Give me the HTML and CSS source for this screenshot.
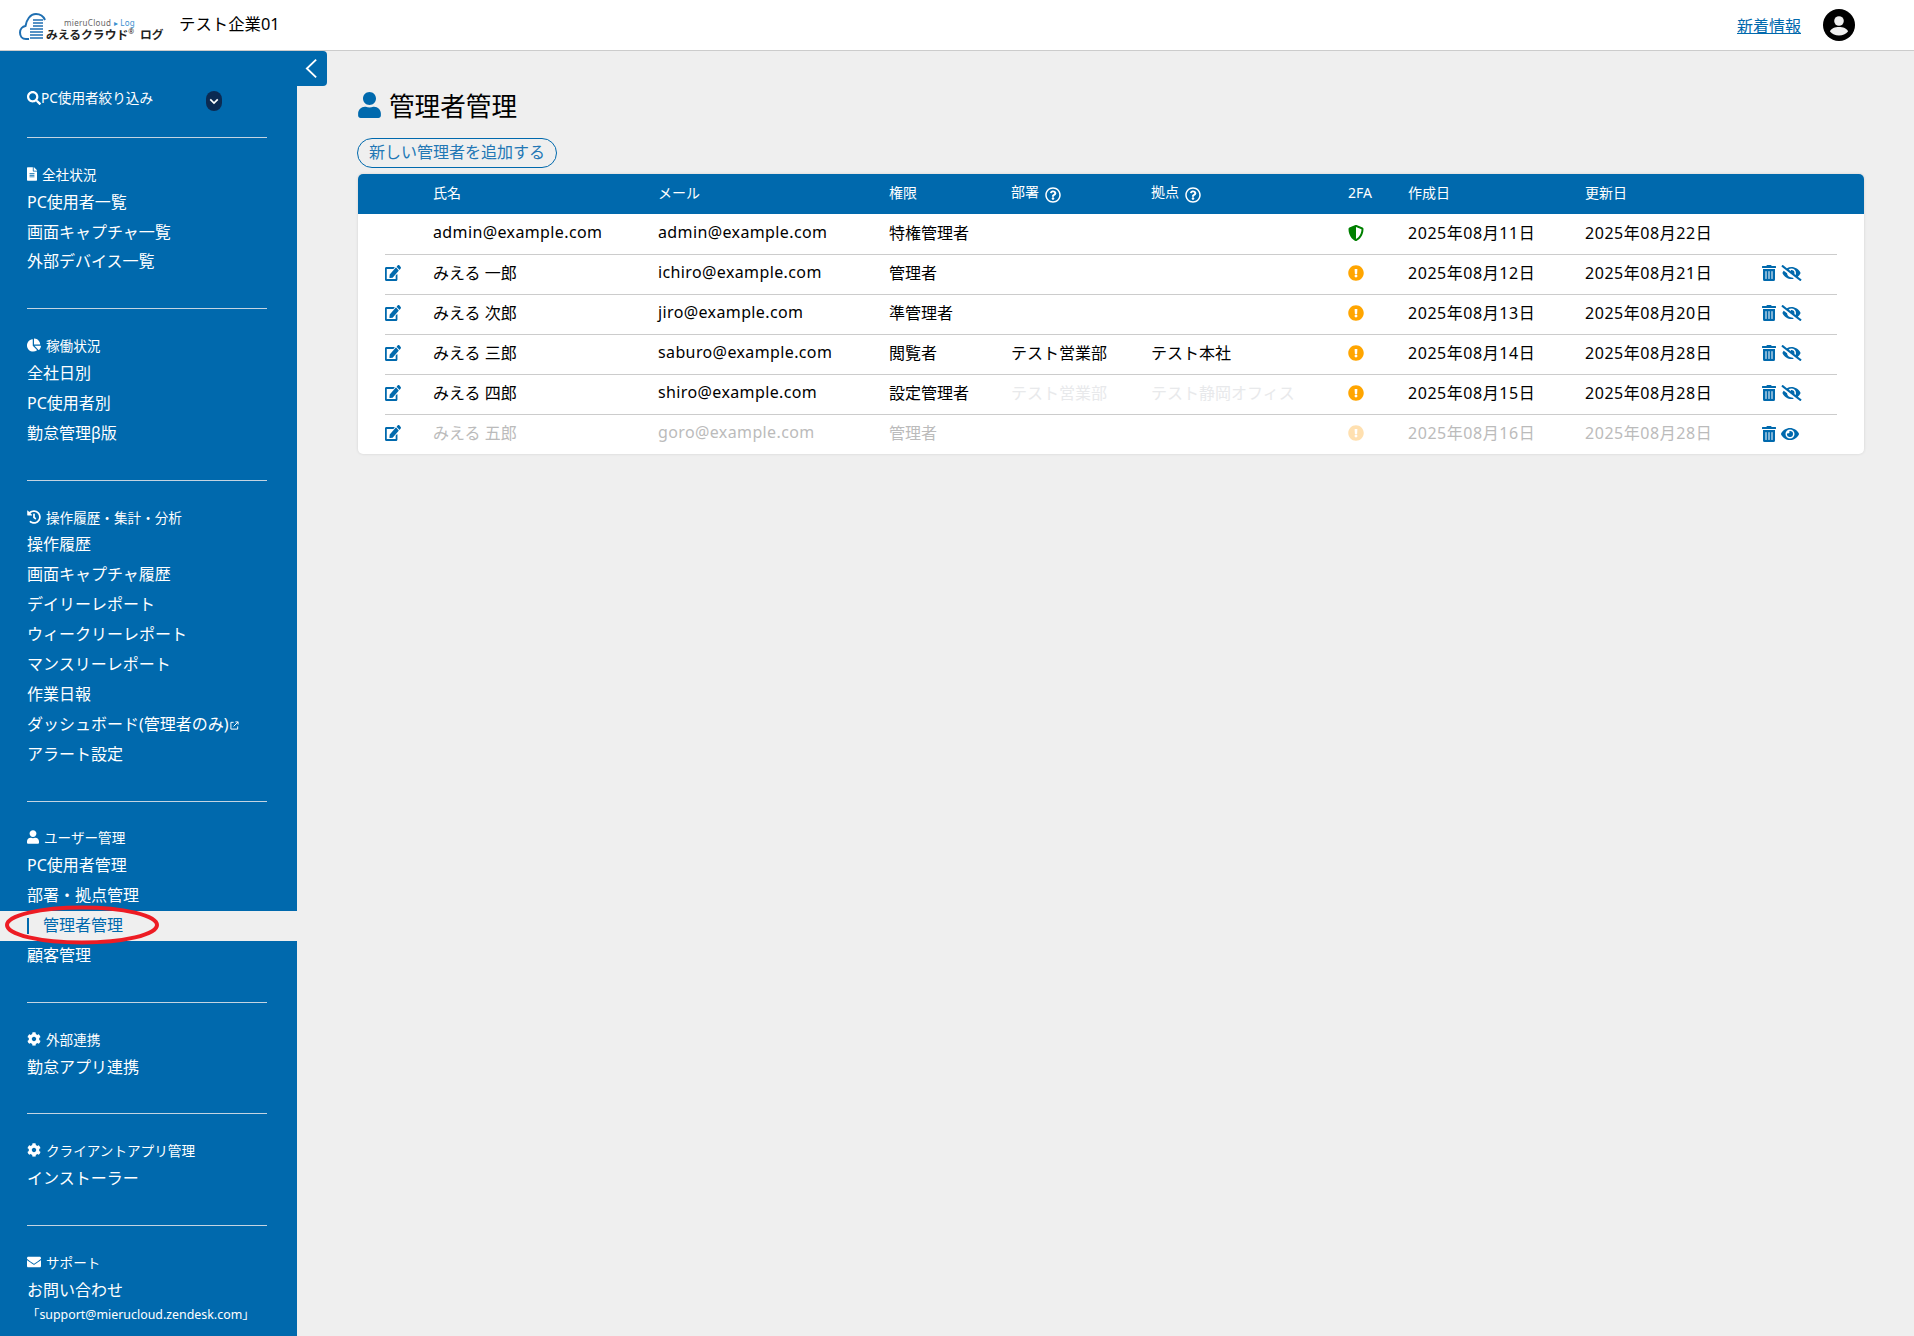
FILE: index.html
```html
<!DOCTYPE html>
<html lang="ja">
<head>
    <meta charset="utf-8">
    <meta name="viewport" content="width=device-width, initial-scale=1.0">
    <title>管理者管理</title>
    <link rel="stylesheet" href="styles.css">
</head>
<body>
    <!-- icon sprite -->
    <svg class="sprite" xmlns="http://www.w3.org/2000/svg">
        <symbol id="i-user" viewBox="0 0 448 512"><path d="M224 256c70.7 0 128-57.3 128-128S294.7 0 224 0 96 57.3 96 128s57.3 128 128 128zm89.6 32h-16.7c-22.2 10.2-46.9 16-72.9 16s-50.6-5.8-72.9-16h-16.7C60.2 288 0 348.2 0 422.4V464c0 26.5 21.5 48 48 48h352c26.5 0 48-21.5 48-48v-41.6c0-74.2-60.2-134.4-134.4-134.4z"/></symbol>
        <symbol id="i-edit" viewBox="0 0 576 512" preserveAspectRatio="none"><path d="M402.6 83.2l90.2 90.2c3.8 3.8 3.8 10 0 13.8L274.4 405.6l-92.8 10.3c-12.4 1.4-22.9-9.1-21.5-21.5l10.3-92.8L388.8 83.2c3.8-3.8 10-3.8 13.8 0zm162-22.9l-48.8-48.8c-15.2-15.2-39.9-15.2-55.2 0l-35.4 35.4c-3.8 3.8-3.8 10 0 13.8l90.2 90.2c3.8 3.8 10 3.8 13.8 0l35.4-35.4c15.2-15.3 15.2-40 0-55.2zM384 346.2V448H64V128h229.8c3.2 0 6.2-1.3 8.5-3.5l40-40c7.6-7.6 2.2-20.5-8.5-20.5H48C21.5 64 0 85.5 0 112v352c0 26.5 21.5 48 48 48h352c26.5 0 48-21.5 48-48V306.2c0-10.7-12.9-16-20.5-8.5l-40 40c-2.2 2.3-3.5 5.3-3.5 8.5z"/></symbol>
        <symbol id="i-trash" viewBox="0 0 448 512"><path d="M32 464a48 48 0 0 0 48 48h288a48 48 0 0 0 48-48V128H32zm272-256a16 16 0 0 1 32 0v224a16 16 0 0 1-32 0zm-96 0a16 16 0 0 1 32 0v224a16 16 0 0 1-32 0zm-96 0a16 16 0 0 1 32 0v224a16 16 0 0 1-32 0zM432 32H312l-9.4-18.7A24 24 0 0 0 281.1 0H166.8a23.72 23.72 0 0 0-21.4 13.3L136 32H16A16 16 0 0 0 0 48v32a16 16 0 0 0 16 16h416a16 16 0 0 0 16-16V48a16 16 0 0 0-16-16z"/></symbol>
        <symbol id="i-eye" viewBox="0 0 576 512"><path d="M572.52 241.4C518.29 135.59 410.93 64 288 64S57.68 135.64 3.48 241.41a32.35 32.35 0 0 0 0 29.19C57.71 376.41 165.07 448 288 448s230.32-71.64 284.52-177.41a32.35 32.35 0 0 0 0-29.19zM288 400a144 144 0 1 1 144-144 143.93 143.93 0 0 1-144 144zm0-240a95.31 95.31 0 0 0-25.31 3.79 47.85 47.85 0 0 1-66.9 66.9A95.78 95.78 0 1 0 288 160z"/></symbol>
        <symbol id="i-eye-slash" viewBox="0 0 640 512"><path d="M320 400c-75.85 0-137.25-58.71-142.9-133.11L72.2 185.82c-13.79 17.3-26.48 35.59-36.72 55.59a32.35 32.35 0 0 0 0 29.19C89.71 376.41 197.07 448 320 448c26.91 0 52.87-4 77.89-10.46L346 397.39a144.13 144.13 0 0 1-26 2.61zm313.82 58.1l-110.55-85.44a331.25 331.25 0 0 0 81.25-102.07 32.35 32.35 0 0 0 0-29.19C550.29 135.59 442.93 64 320 64a308.15 308.15 0 0 0-147.32 37.7L45.46 3.37A16 16 0 0 0 23 6.18L3.37 31.45A16 16 0 0 0 6.18 53.9l588.36 454.73a16 16 0 0 0 22.46-2.81l19.64-25.27a16 16 0 0 0-2.82-22.45zm-183.72-142l-39.3-30.38A94.75 94.75 0 0 0 416 256a94.76 94.76 0 0 0-121.31-92.21A47.65 47.65 0 0 1 304 192a46.64 46.64 0 0 1-1.54 10l-73.61-56.89A142.31 142.31 0 0 1 320 112a143.92 143.92 0 0 1 144 144c0 21.63-5.29 41.79-13.9 60.11z"/></symbol>
        <symbol id="i-warn" viewBox="0 0 512 512"><path d="M504 256c0 136.997-111.043 248-248 248S8 392.997 8 256C8 119.083 119.043 8 256 8s248 111.083 248 248zm-248 50c-25.405 0-46 20.595-46 46s20.595 46 46 46 46-20.595 46-46-20.595-46-46-46zm-43.673-165.346l7.418 136c.347 6.364 5.609 11.346 11.982 11.346h48.546c6.373 0 11.635-4.982 11.982-11.346l7.418-136c.375-6.874-5.098-12.654-11.982-12.654h-63.383c-6.884 0-12.356 5.78-11.981 12.654z"/></symbol>
        <symbol id="i-shield" viewBox="0 0 512 512"><path d="M466.5 83.7l-192-80a48.15 48.15 0 0 0-36.9 0l-192 80C27.7 91.1 16 108.6 16 128c0 198.5 114.5 335.7 221.5 380.3 11.8 4.9 25.1 4.9 36.9 0C360.1 472.6 496 349.3 496 128c0-19.4-11.7-36.9-29.5-44.3zM256.1 446.3l-.1-381 175.9 73.3c-3.3 151.4-82.1 261.1-175.8 307.7z"/></symbol>
        <symbol id="i-question" viewBox="0 0 512 512"><path d="M256 8C119.043 8 8 119.083 8 256c0 136.997 111.043 248 248 248s248-111.003 248-248C504 119.083 392.957 8 256 8zm0 448c-110.532 0-200-89.431-200-200 0-110.495 89.472-200 200-200 110.491 0 200 89.471 200 200 0 110.53-89.431 200-200 200zm107.244-255.2c0 67.052-72.421 68.084-72.421 92.863V300c0 6.627-5.373 12-12 12h-45.647c-6.627 0-12-5.373-12-12v-8.659c0-35.745 27.1-50.034 47.579-61.516 17.561-9.845 28.324-16.541 28.324-29.579 0-17.246-21.999-28.693-39.784-28.693-23.189 0-33.894 10.977-48.942 29.969-4.057 5.12-11.46 6.071-16.666 2.124l-27.824-21.098c-5.107-3.872-6.251-11.066-2.644-16.363C184.846 131.491 214.94 112 261.794 112c49.071 0 101.45 38.304 101.45 88.8zM298 368c0 23.159-18.841 42-42 42s-42-18.841-42-42 18.841-42 42-42 42 18.841 42 42z"/></symbol>
        <symbol id="i-search" viewBox="0 0 512 512"><path d="M505 442.7L405.3 343c-4.5-4.5-10.6-7-17-7H372c27.6-35.3 44-79.7 44-128C416 93.1 322.9 0 208 0S0 93.1 0 208s93.1 208 208 208c48.3 0 92.7-16.4 128-44v16.3c0 6.4 2.5 12.5 7 17l99.7 99.7c9.4 9.4 24.6 9.4 33.9 0l28.3-28.3c9.4-9.4 9.4-24.6.1-34zM208 336c-70.7 0-128-57.2-128-128 0-70.7 57.2-128 128-128 70.7 0 128 57.2 128 128 0 70.7-57.2 128-128 128z"/></symbol>
        <symbol id="i-file" viewBox="0 0 384 512"><path d="M224 136V0H24C10.7 0 0 10.7 0 24v464c0 13.3 10.7 24 24 24h336c13.3 0 24-10.7 24-24V160H248c-13.2 0-24-10.8-24-24zm64 236c0 6.6-5.4 12-12 12H108c-6.6 0-12-5.4-12-12v-8c0-6.6 5.4-12 12-12h168c6.6 0 12 5.4 12 12v8zm0-64c0 6.6-5.4 12-12 12H108c-6.6 0-12-5.4-12-12v-8c0-6.6 5.4-12 12-12h168c6.6 0 12 5.4 12 12v8zm0-72v8c0 6.6-5.4 12-12 12H108c-6.6 0-12-5.4-12-12v-8c0-6.6 5.4-12 12-12h168c6.6 0 12 5.4 12 12zm96-114.1v6.1H256V0h6.1c6.4 0 12.5 2.5 17 7l97.9 98c4.5 4.5 7 10.6 7 16.9z"/></symbol>
        <symbol id="i-pie" viewBox="0 0 544 512"><path d="M527.79 288H290.5l158.03 158.03c6.04 6.04 15.98 6.53 22.19.68 38.7-36.46 65.32-85.61 73.13-140.86 1.34-9.46-6.51-17.85-16.06-17.85zm-15.83-64.8C503.72 103.74 408.26 8.28 288.8.04 279.68-.59 272 7.1 272 16.24V240h223.77c9.14 0 16.82-7.68 16.19-16.8zM224 288V50.71c0-9.55-8.39-17.4-17.84-16.06C86.99 51.49-4.1 155.6.14 280.37 4.5 408.51 114.83 513.59 243.03 511.98c50.4-.63 96.97-16.87 135.26-44.03 7.9-5.6 8.42-17.23 1.57-24.08L224 288z"/></symbol>
        <symbol id="i-history" viewBox="0 0 512 512"><path d="M504 255.531c.253 136.64-111.18 248.372-247.82 248.468-59.015.042-113.223-20.53-155.822-54.911-11.077-8.94-11.905-25.541-1.839-35.607l11.267-11.267c8.609-8.609 22.353-9.551 31.891-1.984C173.062 425.135 212.781 440 256 440c101.705 0 184-82.311 184-184 0-101.705-82.311-184-184-184-48.814 0-93.149 18.969-126.068 49.932l50.754 50.754c10.08 10.08 2.941 27.314-11.313 27.314H24c-8.837 0-16-7.163-16-16V38.627c0-14.254 17.234-21.393 27.314-11.314l49.372 49.372C129.209 34.136 189.552 8 256 8c136.81 0 247.747 110.78 248 247.531zm-180.912 78.784l9.823-12.63c8.138-10.463 6.253-25.542-4.21-33.679L288 256.349V152c0-13.255-10.745-24-24-24h-16c-13.255 0-24 10.745-24 24v135.651l65.409 50.874c10.463 8.137 25.541 6.253 33.679-4.21z"/></symbol>
        <symbol id="i-cog" viewBox="0 0 512 512"><path d="M487.4 315.7l-42.6-24.6c4.3-23.2 4.3-47 0-70.2l42.6-24.6c4.9-2.8 7.1-8.6 5.5-14-11.1-35.6-30-67.8-54.7-94.6-3.8-4.1-10-5.1-14.8-2.3L380.8 110c-17.9-15.4-38.5-27.3-60.8-35.1V25.8c0-5.6-3.9-10.5-9.4-11.7-36.7-8.2-74.3-7.8-109.2 0-5.5 1.2-9.4 6.1-9.4 11.7V75c-22.2 7.9-42.8 19.8-60.8 35.1L88.7 85.5c-4.9-2.8-11-1.9-14.8 2.3-24.7 26.7-43.6 58.9-54.7 94.6-1.7 5.4.6 11.2 5.5 14L67.3 221c-4.3 23.2-4.3 47 0 70.2l-42.6 24.6c-4.9 2.8-7.1 8.6-5.5 14 11.1 35.6 30 67.8 54.7 94.6 3.8 4.1 10 5.1 14.8 2.3l42.6-24.6c17.9 15.4 38.5 27.3 60.8 35.1v49.2c0 5.6 3.9 10.5 9.4 11.7 36.7 8.2 74.3 7.8 109.2 0 5.5-1.2 9.4-6.1 9.4-11.7v-49.2c22.2-7.9 42.8-19.8 60.8-35.1l42.6 24.6c4.9 2.8 11 1.9 14.8-2.3 24.7-26.7 43.6-58.9 54.7-94.6 1.5-5.5-.7-11.3-5.6-14.1zM256 336c-44.1 0-80-35.9-80-80s35.9-80 80-80 80 35.9 80 80-35.9 80-80 80z"/></symbol>
        <symbol id="i-mail" viewBox="0 0 512 512"><path d="M502.3 190.8c3.9-3.1 9.7-.2 9.7 4.7V400c0 26.5-21.5 48-48 48H48c-26.5 0-48-21.5-48-48V195.6c0-5 5.7-7.8 9.7-4.7 22.4 17.4 52.1 39.5 154.1 113.6 21.1 15.4 56.7 47.8 92.2 47.6 35.7.3 72-32.8 92.3-47.6 102-74.1 131.6-96.3 154-113.7zM256 320c23.2.4 56.6-29.2 73.4-41.4 132.7-96.3 142.8-104.7 173.4-128.7 5.8-4.5 9.2-11.5 9.2-18.9v-19c0-26.5-21.5-48-48-48H48C21.5 64 0 85.5 0 112v19c0 7.4 3.4 14.3 9.2 18.9 30.6 23.9 40.7 32.4 173.4 128.7 16.8 12.2 50.2 41.8 73.4 41.4z"/></symbol>
    </svg>

    <header class="topbar">
        <div class="logo">
            <svg class="logo-cloud" viewBox="0 0 28 28" fill="none">
                <path d="M10 27H7C3 27 1 24 1 20.500 1 17 3.500 14.500 6.500 14 7.500 8 11 2 17 2c4 0 7.500 2.500 9 6" stroke="#1f6fb2" stroke-width="2"/>
                <path d="M14 8h10M14 11h10M14 14h10M11 17h13M11 20h13M11 23h13M11 26h13" stroke="#1f6fb2" stroke-width="1.600"/>
            </svg>
            <div class="logo-text">
                <span class="logo-sub">mieruCloud <em>▸ Log</em></span>
                <span class="logo-main">みえるクラウド<sup>®</sup>ログ</span>
            </div>
        </div>
        <span class="company">テスト企業01</span>
        <a class="news" href="#">新着情報</a>
        <svg class="avatar" viewBox="0 0 32 32">
            <circle cx="16" cy="16" r="16" fill="#000"/>
            <circle cx="16" cy="12" r="4.800" fill="#efefef"/>
            <path d="M7 22.500c1-3.300 5-4.500 9-4.500s8 1.200 9 4.500c-2.200 2.500-5.400 4-9 4s-6.800-1.500-9-4z" fill="#efefef"/>
        </svg>
    </header>

    <div class="layout">
        <nav class="sidebar">
            <button type="button" class="collapse">
                <svg viewBox="0 0 14 22" fill="none"><path d="M12 1.500 2 11l10 9.500" stroke="#fff" stroke-width="2"/></svg>
            </button>

            <div class="filter">
                <svg class="icon"><use href="#i-search"/></svg>
                <span class="filter-label">PC使用者絞り込み</span>
                <span class="filter-toggle">
                    <svg viewBox="0 0 12 8" fill="none"><path d="M1.500 1.500 6 6l4.500-4.500" stroke="#fff" stroke-width="2"/></svg>
                </span>
            </div>
            <div class="rule"></div>

            <section class="nav-section">
                <h3 class="nav-title"><svg class="icon icon-file"><use href="#i-file"/></svg>全社状況</h3>
                <a class="nav-item">PC使用者一覧</a>
                <a class="nav-item">画面キャプチャ一覧</a>
                <a class="nav-item">外部デバイス一覧</a>
            </section>
            <div class="rule"></div>

            <section class="nav-section">
                <h3 class="nav-title"><svg class="icon"><use href="#i-pie"/></svg>稼働状況</h3>
                <a class="nav-item">全社日別</a>
                <a class="nav-item">PC使用者別</a>
                <a class="nav-item">勤怠管理β版</a>
            </section>
            <div class="rule"></div>

            <section class="nav-section">
                <h3 class="nav-title"><svg class="icon"><use href="#i-history"/></svg>操作履歴・集計・分析</h3>
                <a class="nav-item">操作履歴</a>
                <a class="nav-item">画面キャプチャ履歴</a>
                <a class="nav-item">デイリーレポート</a>
                <a class="nav-item">ウィークリーレポート</a>
                <a class="nav-item">マンスリーレポート</a>
                <a class="nav-item">作業日報</a>
                <a class="nav-item">ダッシュボード(管理者のみ)<svg class="ext" viewBox="0 0 10 10" fill="none"><path d="M8.500 6v3h-7.500v-7.500h3M4 6l5-5M6 1h3v3" stroke="#fff" stroke-width="1.100"/></svg></a>
                <a class="nav-item">アラート設定</a>
            </section>
            <div class="rule"></div>

            <section class="nav-section">
                <h3 class="nav-title"><svg class="icon icon-user"><use href="#i-user"/></svg>ユーザー管理</h3>
                <a class="nav-item">PC使用者管理</a>
                <a class="nav-item">部署・拠点管理</a>
                <a class="nav-item active">管理者管理
                    <svg class="callout" viewBox="0 0 154 40" fill="none"><ellipse cx="77" cy="20" rx="75" ry="17.500" stroke="#ed1c24" stroke-width="4"/></svg>
                </a>
                <a class="nav-item">顧客管理</a>
            </section>
            <div class="rule"></div>

            <section class="nav-section">
                <h3 class="nav-title"><svg class="icon"><use href="#i-cog"/></svg>外部連携</h3>
                <a class="nav-item">勤怠アプリ連携</a>
            </section>
            <div class="rule"></div>

            <section class="nav-section">
                <h3 class="nav-title"><svg class="icon"><use href="#i-cog"/></svg>クライアントアプリ管理</h3>
                <a class="nav-item">インストーラー</a>
            </section>
            <div class="rule"></div>

            <section class="nav-section">
                <h3 class="nav-title"><svg class="icon"><use href="#i-mail"/></svg>サポート</h3>
                <a class="nav-item">お問い合わせ</a>
                <p class="nav-note">「support@mierucloud.zendesk.com」</p>
            </section>
        </nav>

        <main class="content">
            <h1 class="page-title"><svg class="icon"><use href="#i-user"/></svg>管理者管理</h1>
            <button type="button" class="add-btn">新しい管理者を追加する</button>

            <div class="table-card">
                <table class="admin-table">
                    <colgroup>
                        <col class="c-pad"><col class="c-edit"><col class="c-name"><col class="c-mail"><col class="c-role"><col class="c-dept"><col class="c-site"><col class="c-2fa"><col class="c-date"><col class="c-date2"><col class="c-act"><col class="c-pad">
                    </colgroup>
                    <thead>
                        <tr>
                            <th></th><th></th>
                            <th>氏名</th>
                            <th>メール</th>
                            <th>権限</th>
                            <th class="has-help">部署<svg class="icon help"><use href="#i-question"/></svg></th>
                            <th class="has-help">拠点<svg class="icon help"><use href="#i-question"/></svg></th>
                            <th>2FA</th>
                            <th>作成日</th>
                            <th>更新日</th>
                            <th></th><th></th>
                        </tr>
                    </thead>
                    <tbody>
                        <tr>
                            <td></td><td></td>
                            <td class="latin">admin@example.com</td>
                            <td class="latin">admin@example.com</td>
                            <td>特権管理者</td>
                            <td></td><td></td>
                            <td><svg class="icon shield"><use href="#i-shield"/></svg></td>
                            <td class="date">2025年08月11日</td>
                            <td class="date">2025年08月22日</td>
                            <td></td><td></td>
                        </tr>
                        <tr>
                            <td></td><td><svg class="icon edit"><use href="#i-edit"/></svg></td>
                            <td>みえる 一郎</td>
                            <td class="latin">ichiro@example.com</td>
                            <td>管理者</td>
                            <td></td><td></td>
                            <td><svg class="icon warn"><use href="#i-warn"/></svg></td>
                            <td class="date">2025年08月12日</td>
                            <td class="date">2025年08月21日</td>
                            <td><div class="actions"><svg class="icon trash"><use href="#i-trash"/></svg><svg class="icon eye-off"><use href="#i-eye-slash"/></svg></div></td><td></td>
                        </tr>
                        <tr>
                            <td></td><td><svg class="icon edit"><use href="#i-edit"/></svg></td>
                            <td>みえる 次郎</td>
                            <td class="latin">jiro@example.com</td>
                            <td>準管理者</td>
                            <td></td><td></td>
                            <td><svg class="icon warn"><use href="#i-warn"/></svg></td>
                            <td class="date">2025年08月13日</td>
                            <td class="date">2025年08月20日</td>
                            <td><div class="actions"><svg class="icon trash"><use href="#i-trash"/></svg><svg class="icon eye-off"><use href="#i-eye-slash"/></svg></div></td><td></td>
                        </tr>
                        <tr>
                            <td></td><td><svg class="icon edit"><use href="#i-edit"/></svg></td>
                            <td>みえる 三郎</td>
                            <td class="latin">saburo@example.com</td>
                            <td>閲覧者</td>
                            <td>テスト営業部</td>
                            <td>テスト本社</td>
                            <td><svg class="icon warn"><use href="#i-warn"/></svg></td>
                            <td class="date">2025年08月14日</td>
                            <td class="date">2025年08月28日</td>
                            <td><div class="actions"><svg class="icon trash"><use href="#i-trash"/></svg><svg class="icon eye-off"><use href="#i-eye-slash"/></svg></div></td><td></td>
                        </tr>
                        <tr>
                            <td></td><td><svg class="icon edit"><use href="#i-edit"/></svg></td>
                            <td>みえる 四郎</td>
                            <td class="latin">shiro@example.com</td>
                            <td>設定管理者</td>
                            <td class="ghost">テスト営業部</td>
                            <td class="ghost">テスト静岡オフィス</td>
                            <td><svg class="icon warn"><use href="#i-warn"/></svg></td>
                            <td class="date">2025年08月15日</td>
                            <td class="date">2025年08月28日</td>
                            <td><div class="actions"><svg class="icon trash"><use href="#i-trash"/></svg><svg class="icon eye-off"><use href="#i-eye-slash"/></svg></div></td><td></td>
                        </tr>
                        <tr class="disabled">
                            <td></td><td><svg class="icon edit"><use href="#i-edit"/></svg></td>
                            <td>みえる 五郎</td>
                            <td class="latin">goro@example.com</td>
                            <td>管理者</td>
                            <td></td><td></td>
                            <td><svg class="icon warn"><use href="#i-warn"/></svg></td>
                            <td class="date">2025年08月16日</td>
                            <td class="date">2025年08月28日</td>
                            <td><div class="actions"><svg class="icon trash"><use href="#i-trash"/></svg><svg class="icon eye-on"><use href="#i-eye"/></svg></div></td><td></td>
                        </tr>
                    </tbody>
                </table>
            </div>
        </main>
    </div>
</body>
</html>
```

FILE: styles.css
```css
* {
    box-sizing: border-box;
}
html, body {
    height: 100%;
}
body {
    margin: 0;
    overflow: hidden;
    display: flex;
    flex-direction: column;
    background-color: #efefef;
    color: #000;
    font-family: "Noto Sans", "Noto Sans CJK JP", sans-serif;
    font-size: 16px;
}
.sprite {
    display: none;
}
.icon {
    fill: currentColor;
    flex: none;
}

/* top bar */
.topbar {
    flex: none;
    height: 51px;
    display: flex;
    align-items: center;
    padding: 0 59px 0 19px;
    background-color: #fff;
    border-bottom: 1px solid #ccc;
}
.logo {
    display: flex;
    align-items: flex-end;
    width: 160px;
    height: 30px;
    margin-top: 1px;
}
.logo-cloud {
    width: 28px;
    height: 28px;
    flex: none;
    margin-bottom: 1px;
}
.logo-text {
    display: flex;
    flex-direction: column;
    line-height: 1;
    white-space: nowrap;
}
.logo-sub {
    font-size: 8px;
    color: #666;
    margin-left: 17px;
    letter-spacing: .3px;
}
.logo-sub em {
    font-style: normal;
    color: #3a8fd0;
}
.logo-main {
    font-size: 11.8px;
    font-weight: 700;
    color: #222;
    margin-top: 2px;
    margin-left: -1px;
}
.logo-main sup {
    font-size: 7px;
    font-weight: 400;
    line-height: 0;
    margin-right: 6px;
}
.company {
    font-size: 16.4px;
    margin-bottom: 4px;
}
.news {
    margin-left: auto;
    color: #0069ad;
    text-decoration: underline;
}
.avatar {
    width: 32px;
    height: 32px;
    margin-left: 22px;
}

/* sidebar */
.layout {
    flex: 1;
    min-height: 0;
    display: flex;
}
.sidebar {
    position: relative;
    flex: none;
    width: 297px;
    background-color: #0069ad;
    color: #fff;
}
.collapse {
    position: absolute;
    top: 0;
    left: 297px;
    width: 30px;
    height: 35px;
    padding: 0 2px 0 0;
    display: flex;
    align-items: center;
    justify-content: center;
    border: 0;
    border-radius: 0 4px 4px 0;
    background-color: #0069ad;
}
.collapse svg {
    width: 13px;
    height: 21px;
}
.filter {
    height: 86px;
    padding: 33px 0 0 27px;
    display: flex;
    align-items: flex-start;
    font-size: 13.6px;
    line-height: 27px;
}
.filter .icon {
    width: 14px;
    height: 14px;
    margin-top: 7px;
}
.filter-toggle {
    width: 16px;
    height: 20px;
    margin: 7px 0 0 53px;
    display: flex;
    align-items: center;
    justify-content: center;
    border-radius: 8px;
    background-color: #0b2a52;
}
.filter-toggle svg {
    width: 10px;
    height: 7px;
}
.rule {
    height: 1px;
    margin: 0 30px 0 27px;
    background-color: #c4d4e2;
}
.nav-section {
    padding: 25px 0 31px;
}
.nav-title {
    display: flex;
    align-items: center;
    gap: 5px;
    height: 24.6px;
    margin: 0;
    padding: 0 0 3px 27px;
    font-size: 13.6px;
    font-weight: 400;
}
.nav-title .icon {
    width: 14px;
    height: 14px;
}
.nav-title .icon-file {
    width: 10px;
}
.nav-title .icon-user {
    width: 12px;
}
.nav-item {
    position: relative;
    display: block;
    height: 29.93px;
    padding-left: 27px;
    line-height: 28px;
    white-space: nowrap;
}
.nav-item.active {
    padding-left: 43px;
    background-color: #efefef;
    color: #0069ad;
}
.nav-item.active::before {
    content: "";
    position: absolute;
    left: 27px;
    top: 7px;
    width: 2px;
    height: 16px;
    background-color: #0069ad;
}
.callout {
    position: absolute;
    left: 4.5px;
    top: -6.5px;
    width: 154px;
    height: 40px;
}
.ext {
    width: 9px;
    height: 9px;
    margin-left: 1px;
}
.nav-note {
    margin: 0;
    height: 18px;
    padding-left: 27px;
    font-size: 12.4px;
    line-height: 18px;
    white-space: nowrap;
}

/* main area */
.content {
    flex: 1;
    min-width: 0;
    padding: 0 50px 0 61px;
}
.page-title {
    display: flex;
    align-items: center;
    gap: 8px;
    height: 87px;
    margin: 0;
    padding-top: 20px;
    font-size: 25.6px;
    font-weight: 400;
}
.page-title .icon {
    width: 23px;
    height: 26px;
    color: #0069ad;
}
.add-btn {
    display: block;
    width: 200px;
    height: 30px;
    margin-left: -1px;
    padding: 0 0 2px;
    border: 1px solid #0069ad;
    border-radius: 15px;
    background: transparent;
    color: #2277b5;
    font: inherit;
    line-height: 24px;
}
.table-card {
    margin-top: 6px;
    background-color: #fff;
    border-radius: 5px;
    overflow: hidden;
    box-shadow: 0 0 3px rgba(0, 0, 0, .12);
}
.admin-table {
    width: 100%;
    table-layout: fixed;
    border-collapse: collapse;
}
.c-pad { width: 27px; }
.c-edit { width: 48px; }
.c-name { width: 225px; }
.c-mail { width: 231px; }
.c-role { width: 122px; }
.c-dept { width: 140px; }
.c-site { width: 197px; }
.c-2fa { width: 60px; }
.c-date { width: 177px; }
.c-date2 { width: 177px; }
.admin-table th {
    height: 40px;
    padding: 0 0 4px;
    background-color: #0069ad;
    color: #fff;
    font-size: 14px;
    font-weight: 400;
    text-align: left;
}
.admin-table td {
    height: 40px;
    padding: 0 0 4px;
    border-bottom: 1px solid #ccc;
    white-space: nowrap;
}
.admin-table td:first-child,
.admin-table td:last-child,
.admin-table tr:last-child td {
    border-bottom: 0;
}
.admin-table td .icon {
    display: block;
    margin-top: 2px;
}
.latin {
    letter-spacing: .38px;
}
.admin-table .date {
    letter-spacing: .55px;
}
.ghost {
    color: #e8e9eb;
}
.disabled td {
    color: #bbb;
}
.help {
    width: 16px;
    height: 16px;
    margin-left: 6px;
    vertical-align: -6px;
}
.edit {
    width: 16px;
    height: 16px;
    color: #0069ad;
}
.disabled td .edit,
.disabled td .trash,
.disabled td .eye-on {
    color: #0069ad;
}
.shield {
    width: 16px;
    height: 16px;
    color: #008000;
}
.warn {
    width: 16px;
    height: 16px;
    color: #ffa500;
}
.disabled td .warn {
    color: #ffe0b0;
}
.actions {
    display: flex;
    gap: 5px;
}
.actions .icon {
    height: 16px;
    color: #0069ad;
}
.disabled .actions {
    padding-top: 2px;
}
.trash {
    width: 14px;
}
.eye-off {
    width: 21px;
}
.eye-on {
    width: 18px;
}
```
